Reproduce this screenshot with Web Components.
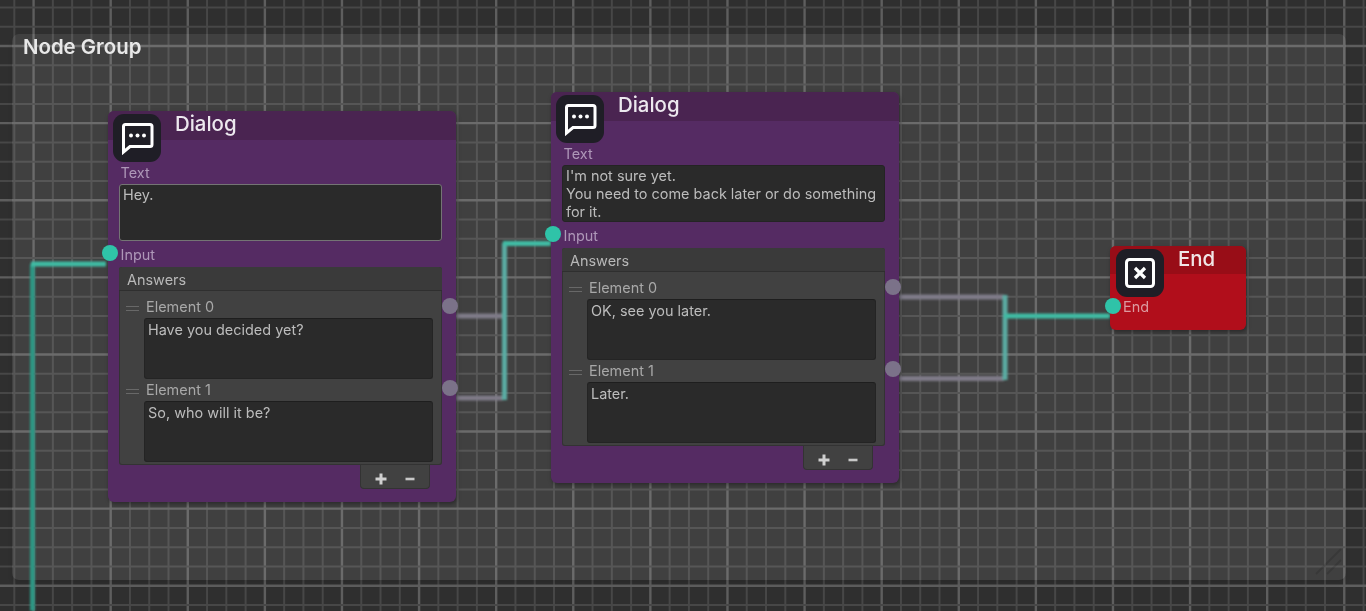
<!DOCTYPE html>
<html>
<head>
<meta charset="utf-8">
<title>Node Graph</title>
<style>
  html, body { margin: 0; height: 100%; background: #2f2f2f; overflow: hidden; }
</style>
</head>
<body>
<graph-canvas>
  <node-group heading="Node Group"></node-group>
  <graph-edges></graph-edges>
  <dialog-node x="108" y="111" focused>
    <span slot="text">Hey.</span>
    <answer-item label="Element 0">Have you decided yet?</answer-item>
    <answer-item label="Element 1">So, who will it be?</answer-item>
  </dialog-node>
  <dialog-node x="551" y="92">
    <span slot="text">I'm not sure yet.<br>You need to come back later or do something for it.</span>
    <answer-item label="Element 0">OK, see you later.</answer-item>
    <answer-item label="Element 1">Later.</answer-item>
  </dialog-node>
  <end-node x="1110" y="246"></end-node>
</graph-canvas>

<script>
(function() {
  const bubbleIcon = `<svg width="34" height="34" viewBox="0 0 34 34" fill="none">
      <path d="M3.5 31V5.5Q3.5 3.5 5.5 3.5H30Q32 3.5 32 5.5V23.5Q32 25.5 30 25.5H10Z" stroke="#fff" stroke-width="3"/>
      <circle cx="11" cy="14.5" r="2" fill="#fff"/>
      <circle cx="17.5" cy="14.5" r="2" fill="#fff"/>
      <circle cx="24" cy="14.5" r="2" fill="#fff"/>
    </svg>`;
  const closeIcon = `<svg width="34" height="34" viewBox="0 0 34 34" fill="none">
      <rect x="3.5" y="3.5" width="27" height="27" rx="3" stroke="#fff" stroke-width="3"/>
      <path d="M12 12L22 22M22 12L12 22" stroke="#fff" stroke-width="3.2"/>
    </svg>`;

  // background grid
  class GraphCanvas extends HTMLElement {
    constructor() {
      super();
      this.attachShadow({mode: 'open'});
      let lines = '';
      for (let i = 0; i < 72; i++) {
        const x = 14.3 + i * 19.275;
        const major = i % 4 === 1;
        lines += `<line x1="${x}" x2="${x}" y1="0" y2="611" stroke="${major ? '#5e5e5e' : '#474747'}" stroke-width="${major ? 2.4 : 2}"/>`;
      }
      for (let i = 0; i < 33; i++) {
        const y = 7.5 + i * 19.275;
        const major = i % 4 === 2;
        lines += `<line y1="${y}" y2="${y}" x1="0" x2="1366" stroke="${major ? '#5e5e5e' : '#474747'}" stroke-width="${major ? 2.4 : 2}"/>`;
      }
      this.shadowRoot.innerHTML = `
      <style>
        :host {
          display: block;
          position: relative;
          width: 1366px;
          height: 611px;
          overflow: hidden;
          background: #2f2f2f;
          font-family: Inter, "Liberation Sans", sans-serif;
          filter: blur(0.35px);
        }
        svg { position: absolute; left: 0; top: 0; }
      </style>
      <svg width="1366" height="611">${lines}</svg>
      <slot></slot>`;
    }
  }

  class NodeGroup extends HTMLElement {
    constructor() {
      super();
      this.attachShadow({mode: 'open'});
      this.shadowRoot.innerHTML = `
      <style>
        :host {
          display: block;
          position: absolute;
          left: 12px;
          top: 34px;
          width: 1334px;
          height: 546px;
          box-sizing: border-box;
          padding: 0 11px;
          background: rgba(255, 255, 255, 0.085);
          border-radius: 7px;
          box-shadow: 0 4px 4px rgba(0, 0, 0, 0.1);
        }
        #title {
          font-size: 20.4px;
          line-height: 25px;
          font-weight: 600;
          color: #e8e8e8;
        }
        svg { position: absolute; right: 4px; bottom: 5px; }
      </style>
      <div id="title"></div>
      <svg width="28" height="28" fill="none" stroke="rgba(0,0,0,0.12)" stroke-width="2">
        <path d="M2 27L27 2M13 27L27 13"/>
      </svg>`;
      this.shadowRoot.querySelector('#title').textContent = this.getAttribute('heading');
    }
  }

  // connections between the ports
  class GraphEdges extends HTMLElement {
    constructor() {
      super();
      this.attachShadow({mode: 'open'});
      this.shadowRoot.innerHTML = `
      <style>
        :host { display: block; position: absolute; left: 0; top: 0; }
        svg { display: block; }
        .teal { stroke: #3fbaa3; }
        .fade { stroke: #5aaba2; }
        .low { stroke: #2f9583; }
        .grey { stroke: #7f7a88; }
      </style>
      <svg width="1366" height="611" fill="none" stroke-width="5">
        <defs><filter id="soft" filterUnits="userSpaceOnUse" x="0" y="0" width="1366" height="611"><feGaussianBlur stdDeviation="0.9"/></filter></defs>
        <g filter="url(#soft)">
          <path class="low" d="M32.5 611V264"/>
          <path class="teal" d="M31 264H106"/>
          <path class="grey" d="M456 316H503M456 398H503"/>
          <path class="fade" d="M504.5 400V243"/>
          <path class="teal" d="M503 243.5H551"/>
          <path class="grey" d="M899 297H1004M899 378.5H1004"/>
          <path class="fade" d="M1005 295V380"/>
          <path class="teal" d="M1004 316H1110"/>
        </g>
      </svg>`;
    }
  }

  class PortDot extends HTMLElement {
    constructor() {
      super();
      this.attachShadow({mode: 'open'});
      this.shadowRoot.innerHTML = `
      <style>
        :host {
          display: block;
          position: absolute;
          width: 16px;
          height: 16px;
          border-radius: 50%;
          background: #7b7289;
          z-index: 2;
        }
        :host([live]) { background: #2fc3a8; }
      </style>`;
    }
    connectedCallback() {
      this.style.left = (this.getAttribute('cx') - 8) + 'px';
      this.style.top = (this.getAttribute('cy') - 8) + 'px';
    }
  }

  class NodeIcon extends HTMLElement {
    constructor() {
      super();
      this.attachShadow({mode: 'open'});
      this.shadowRoot.innerHTML = `
      <style>
        :host {
          display: flex;
          align-items: center;
          justify-content: center;
          position: absolute;
          width: 48px;
          height: 48px;
          border-radius: 11px;
          background: #1f1e26;
          z-index: 1;
        }
      </style>
      <slot></slot>`;
    }
  }

  const dialogTemplate = document.createElement('template');
  dialogTemplate.innerHTML = `
  <style>
    :host {
      display: block;
      position: absolute;
      width: 347.5px;
      height: 391px;
      border-radius: 6px;
      background: #552b63;
      box-shadow: 1px 2px 4px rgba(0, 0, 0, 0.35);
      font-size: 14.45px;
      line-height: 18px;
    }
    #header {
      height: 29px;
      box-sizing: border-box;
      padding: 0 0 0 67px;
      background: #4a2451;
      border-radius: 6px 6px 0 0;
      color: #ece8ee;
      font-size: 20.4px;
      line-height: 25px;
      font-weight: 500;
    }
    node-icon { left: 5px; top: 3px; }
    #body {
      display: flex;
      flex-direction: column;
      padding: 24px 14px 0 11px;
    }
    .port-label { color: #ae97b8; padding-left: 1.5px; }
    #text {
      box-sizing: border-box;
      height: 57px;
      margin-top: 2px;
      padding: 1px 3px;
      background: #2a2a2a;
      border: 1px solid #242424;
      border-radius: 3px;
      color: #bcbcbc;
    }
    :host([focused]) #text { border-color: #747474; }
    #input { margin-top: 5px; }
    #answers {
      margin-top: 3px;
      border-radius: 3px;
      background: #414141;
      box-shadow: inset 0 0 0 1px #333;
    }
    #answers-head {
      height: 24px;
      box-sizing: border-box;
      padding: 4px 8px 0;
      background: #3a3a3a;
      border-bottom: 1px solid #2f2f2f;
      border-radius: 3px 3px 0 0;
      color: #b8b8b8;
    }
    #items { padding: 7px 9px 1px 0; }
    #buttons {
      display: flex;
      justify-content: center;
      gap: 18px;
      align-self: flex-end;
      width: 70px;
      height: 24px;
      margin-right: 12px;
      box-sizing: border-box;
      background: #414141;
      border: 1px solid #333;
      border-top: none;
      border-radius: 0 0 4px 4px;
    }
    #buttons svg { margin-top: 8px; }
  </style>
  <div id="header"></div>
  <node-icon>${bubbleIcon}</node-icon>
  <port-dot live cx="2" cy="142.3"></port-dot>
  <port-dot cx="342.3" cy="194.7"></port-dot>
  <port-dot cx="342.3" cy="277.2"></port-dot>
  <div id="body">
    <div class="port-label">Text</div>
    <div id="text"><slot name="text"></slot></div>
    <div id="input" class="port-label">Input</div>
    <div id="answers">
      <div id="answers-head">Answers</div>
      <div id="items"><slot></slot></div>
    </div>
    <div id="buttons">
      <svg width="12" height="12" viewBox="0 0 12 12"><path d="M6 0.5V11.5M0.5 6H11.5" stroke="#d0d0d0" stroke-width="3"/></svg>
      <svg width="10" height="12" viewBox="0 0 10 12"><path d="M0.5 6H9.5" stroke="#c8c8c8" stroke-width="2.6"/></svg>
    </div>
  </div>`;

  class DialogNode extends HTMLElement {
    constructor() {
      super();
      this.attachShadow({mode: 'open'});
      this.shadowRoot.appendChild(dialogTemplate.content.cloneNode(true));
      this.shadowRoot.querySelector('#header').textContent = 'Dialog';
    }
    connectedCallback() {
      this.style.left = this.getAttribute('x') + 'px';
      this.style.top = this.getAttribute('y') + 'px';
    }
  }

  class AnswerItem extends HTMLElement {
    constructor() {
      super();
      this.attachShadow({mode: 'open'});
      this.shadowRoot.innerHTML = `
      <style>
        :host {
          display: grid;
          grid-template-columns: 25px 1fr;
          margin-bottom: 2px;
          color: #bcbcbc;
        }
        #handle {
          width: 13px;
          height: 3px;
          margin: 8px 0 0 7px;
          border-top: 1px solid #686868;
          border-bottom: 1px solid #686868;
        }
        #label { color: #a8a8a8; padding-left: 2px; }
        #box {
          grid-column: 2;
          height: 61px;
          box-sizing: border-box;
          margin-top: 2px;
          padding: 2px 3px;
          background: #2a2a2a;
          border: 1px solid #242424;
          border-top-color: #1e1e1e;
          border-radius: 3px;
        }
      </style>
      <div id="handle"></div>
      <div id="label"></div>
      <div id="box"><slot></slot></div>`;
      this.shadowRoot.querySelector('#label').textContent = this.getAttribute('label');
    }
  }

  class EndNode extends HTMLElement {
    constructor() {
      super();
      this.attachShadow({mode: 'open'});
      this.shadowRoot.innerHTML = `
      <style>
        :host {
          display: block;
          position: absolute;
          width: 136px;
          height: 84px;
          border-radius: 6px;
          background: #b10e1b;
          box-shadow: 1px 2px 4px rgba(0, 0, 0, 0.35);
          font-size: 14.45px;
          line-height: 18px;
        }
        #header {
          height: 28px;
          padding-left: 68px;
          background: #980d17;
          border-radius: 6px 6px 0 0;
          color: #f0e6e6;
          font-size: 20.4px;
          line-height: 25px;
          font-weight: 500;
        }
        node-icon { left: 6px; top: 3px; }
        #label { padding: 24px 0 0 13px; color: #dc9aa0; }
      </style>
      <div id="header">End</div>
      <node-icon>${closeIcon}</node-icon>
      <port-dot live cx="3" cy="60"></port-dot>
      <div id="label">End</div>`;
    }
    connectedCallback() {
      this.style.left = this.getAttribute('x') + 'px';
      this.style.top = this.getAttribute('y') + 'px';
    }
  }

  customElements.define('port-dot', PortDot);
  customElements.define('node-icon', NodeIcon);
  customElements.define('answer-item', AnswerItem);
  customElements.define('dialog-node', DialogNode);
  customElements.define('end-node', EndNode);
  customElements.define('graph-edges', GraphEdges);
  customElements.define('node-group', NodeGroup);
  customElements.define('graph-canvas', GraphCanvas);
})();
</script>
</body>
</html>
